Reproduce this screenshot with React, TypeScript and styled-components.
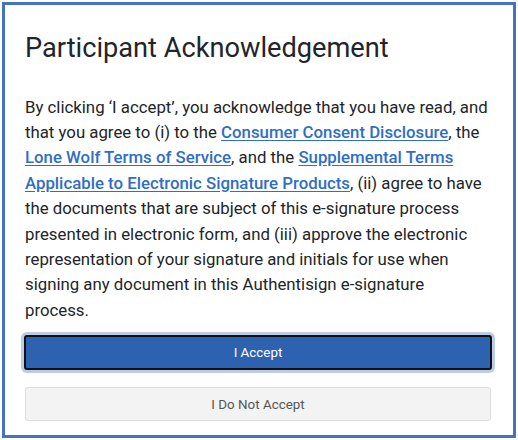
import styled, { createGlobalStyle } from 'styled-components'

const GlobalStyle = createGlobalStyle`
    * {
        box-sizing: border-box;
    }
    body {
        margin: 0;
        background: #ffffff;
        font-family: Roboto, 'Liberation Sans', sans-serif;
    }
`

const Frame = styled.div`
    display: flex;
    flex-flow: column;
    margin: 2px;
    width: 514px;
    height: 436px;
    border: 3px solid #4472c4;
    padding: 27px 22px 14px 20px;
    background: #ffffff;
`

const Title = styled.h1`
    margin: 0;
    font-size: 27.2px;
    font-weight: 400;
    line-height: 32px;
    color: #212529;
`

const Body = styled.p`
    margin: 30.5px 0 0;
    font-size: 16.8px;
    line-height: 25.4px;
    color: #212529;
`

const Link = styled.a`
    color: #2f6ec7;
    font-weight: 500;
    text-decoration: underline;
    text-underline-offset: 2px;
    cursor: pointer;
`

const Actions = styled.div`
    display: flex;
    flex-flow: column;
    gap: 17px;
    margin-top: 12px;
`

const Button = styled.button<{ $primary?: boolean }>`
    height: ${(p) => (p.$primary ? '35px' : '34px')};
    margin: ${(p) => (p.$primary ? '0 -1px' : '0')};
    width: ${(p) => (p.$primary ? 'calc(100% + 2px)' : '100%')};
    border-radius: 3px;
    font-family: Roboto, 'Liberation Sans', sans-serif;
    font-size: 13.4px;
    cursor: pointer;
    background: ${(p) => (p.$primary ? '#2d62b0' : '#f3f3f3')};
    color: ${(p) => (p.$primary ? '#ffffff' : '#555555')};
    border: ${(p) => (p.$primary ? '2px solid #111111' : '1px solid #dedede')};
    box-shadow: ${(p) =>
        p.$primary ? '0 0 0 3px rgba(60, 110, 190, 0.35)' : 'none'};
`

export default function App() {
    return (
        <>
            <GlobalStyle />
            <Frame>
                <Title>Participant Acknowledgement</Title>
                <Body>
                    By clicking ‘I accept’, you acknowledge that you have read,
                    and that you agree to (i) to the{' '}
                    <Link>Consumer Consent Disclosure</Link>, the{' '}
                    <Link>Lone Wolf Terms of Service</Link>, and the{' '}
                    <Link>
                        Supplemental Terms Applicable to Electronic Signature
                        Products
                    </Link>
                    , (ii) agree to have the documents that are subject of this
                    e-signature process presented in electronic form, and (iii)
                    approve the electronic representation of your signature and
                    initials for use when signing any document in this
                    Authentisign e-signature process.
                </Body>
                <Actions>
                    <Button $primary>I Accept</Button>
                    <Button>I Do Not Accept</Button>
                </Actions>
            </Frame>
        </>
    )
}
